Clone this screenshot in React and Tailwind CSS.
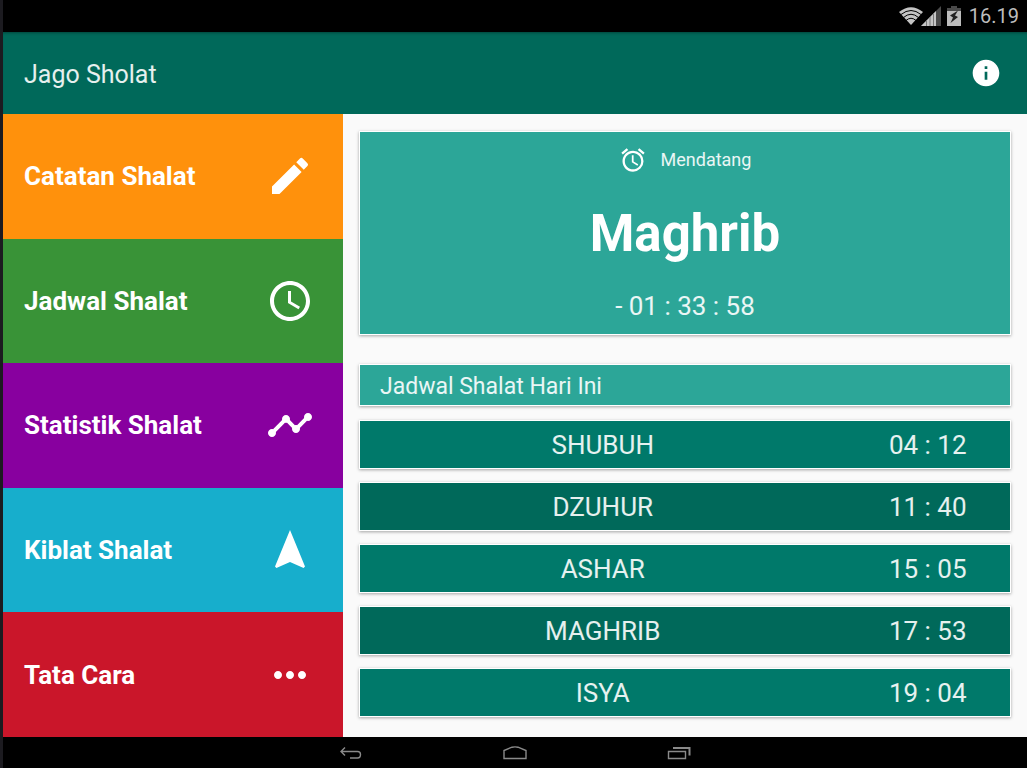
import React from "react";
import {
  MdEdit,
  MdAccessTime,
  MdTimeline,
  MdNavigation,
  MdMoreHoriz,
  MdAlarm,
  MdInfo,
} from "react-icons/md";

const menu = [
  { label: "Catatan Shalat", Icon: MdEdit, color: "bg-[#ff910c]" },
  { label: "Jadwal Shalat", Icon: MdAccessTime, color: "bg-[#399337]" },
  { label: "Statistik Shalat", Icon: MdTimeline, color: "bg-[#88009f]" },
  { label: "Kiblat Shalat", Icon: MdNavigation, color: "bg-[#17aecc]" },
  { label: "Tata Cara", Icon: MdMoreHoriz, color: "bg-[#ca162a]" },
];

const schedule = [
  { name: "SHUBUH", time: "04 : 12", color: "bg-[#00796a]" },
  { name: "DZUHUR", time: "11 : 40", color: "bg-[#00695a]" },
  { name: "ASHAR", time: "15 : 05", color: "bg-[#00796a]" },
  { name: "MAGHRIB", time: "17 : 53", color: "bg-[#00695a]" },
  { name: "ISYA", time: "19 : 04", color: "bg-[#00796a]" },
];

function StatusBar() {
  return (
    <div className="flex h-8 items-center justify-end bg-black pr-2 text-[#bdbdbd]">
      <svg className="h-[18px] w-6" viewBox="0 0 24 18" role="img" aria-label="Wi-Fi">
        <path d="M0 5 Q12 -4.500 24 5 L12 18 Z" fill="#c4c4c4" />
        <g fill="none" stroke="#000" strokeWidth="1">
          <path d="M2 7.500 Q12 -0.500 22 7.500" />
          <path d="M4.500 10.500 Q12 4 19.500 10.500" />
          <path d="M7 13.500 Q12 9 17 13.500" />
        </g>
      </svg>
      <svg className="-ml-0.5 h-5 w-5" viewBox="0 0 20 20" role="img" aria-label="Signal">
        <path d="M0 20 L20 0 V20 Z" fill="#4a4a4a" />
        <path d="M0 20 L15 5 V20 Z" fill="#c4c4c4" />
        <path d="M5.500 14.500V20M9 11V20M12.500 7.500V20" stroke="#777" strokeWidth="1" />
      </svg>
      <svg className="ml-1.5 h-5 w-[14px]" viewBox="0 0 14 20" role="img" aria-label="Battery charging">
        <path d="M4 0H10V2H14V6H0V2H4Z" fill="#4a4a4a" />
        <path d="M0 5H14V20H0Z" fill="#bdbdbd" />
        <path d="M11 4.500 L3 9.500 L6 11.500 L3.500 17 L11 11 L8 9.500 Z" fill="#222" />
      </svg>
      <span className="ml-2 text-[20px] leading-8">16.19</span>
    </div>
  );
}

function NavBar() {
  return (
    <nav className="flex h-[31px] items-center justify-center gap-[140px] bg-black text-[#8a8a8a]">
      <button type="button" aria-label="Back">
        <svg className="h-4 w-6" viewBox="0 0 24 16" fill="none" stroke="currentColor" strokeWidth="1.400">
          <path d="M6 2.500 L2 6.500 L6 10.500 M2 6.500 H18.500 Q21.500 6.500 21.500 9.500 Q21.500 13 18.500 13 H11" />
        </svg>
      </button>
      <button type="button" aria-label="Home">
        <svg className="h-4 w-6" viewBox="0 0 24 16" fill="none" stroke="currentColor" strokeWidth="1.400">
          <path d="M1 13.500 V5.500 L9 2.200 Q12 1.500 15 2.200 L23 5.500 V13.500 Z" />
        </svg>
      </button>
      <button type="button" aria-label="Recent apps">
        <svg className="h-4 w-6" viewBox="0 0 24 16" fill="none" stroke="currentColor" strokeWidth="1.400">
          <path d="M1.500 6.500 H18.500 V13.500 H1.500 Z" />
          <path d="M6 3 H22.500 V10.500" strokeWidth="2" />
        </svg>
      </button>
    </nav>
  );
}

export default function App() {
  return (
    <div className="flex min-h-screen flex-col border-l-[3px] border-[#1c1b20] bg-[#fafafa] font-[Roboto,sans-serif] text-white">
      <StatusBar />
      <header className="flex h-[82px] items-center justify-between bg-[#00695a] pr-[25px] pl-[21px] shadow-[inset_0_3px_3px_-2px_rgba(0,0,0,0.35)]">
        <h1 className="pt-1 text-[25px] leading-8 text-white/90">Jago Sholat</h1>
        <button type="button" aria-label="Info">
          <MdInfo className="size-8" />
        </button>
      </header>

      <div className="flex flex-1">
        <nav className="flex w-[33.2%] flex-col">
          {menu.map(({ label, Icon, color }) => (
            <button
              key={label}
              type="button"
              className={`flex flex-1 items-center justify-between pr-[29px] pl-[21px] text-left ${color}`}
            >
              <span className="text-[26px] leading-8 font-bold">{label}</span>
              <Icon className="size-12" />
            </button>
          ))}
        </nav>

        <main className="flex flex-1 flex-col px-4 pt-[17px] pb-5">
          <section className="flex flex-1 flex-col items-center justify-between border border-white bg-[#2ca698] pt-3.5 pb-3 shadow-[0_1px_3px_rgba(0,0,0,0.35)]">
            <div className="flex items-center gap-3.5">
              <MdAlarm className="size-7" />
              <span className="text-lg text-white/90">Mendatang</span>
            </div>
            <h2 className="pt-1 text-[51px] leading-[60px] font-bold">Maghrib</h2>
            <p className="text-[26px] leading-8 text-white/90">- 01 : 33 : 58</p>
          </section>

          <h3 className="mt-[29px] border border-white bg-[#2ca698] pt-1.5 pb-0.5 pl-5 text-[23px] leading-8 text-white/90 shadow-[0_1px_3px_rgba(0,0,0,0.35)]">
            Jadwal Shalat Hari Ini
          </h3>

          <table aria-label="Jadwal Shalat Hari Ini" className="mt-3.5 block">
            <tbody className="flex flex-col gap-[13px]">
              {schedule.map(({ name, time, color }) => (
                <tr
                  key={name}
                  className={`flex h-[49px] items-center border border-white text-[26px] leading-8 text-white/90 shadow-[0_1px_3px_rgba(0,0,0,0.35)] ${color}`}
                >
                  <td className="w-3/4 pr-0.5 text-center">{name}</td>
                  <td className="w-1/4 pr-0.5 text-center">{time}</td>
                </tr>
              ))}
            </tbody>
          </table>
        </main>
      </div>

      <NavBar />
    </div>
  );
}
